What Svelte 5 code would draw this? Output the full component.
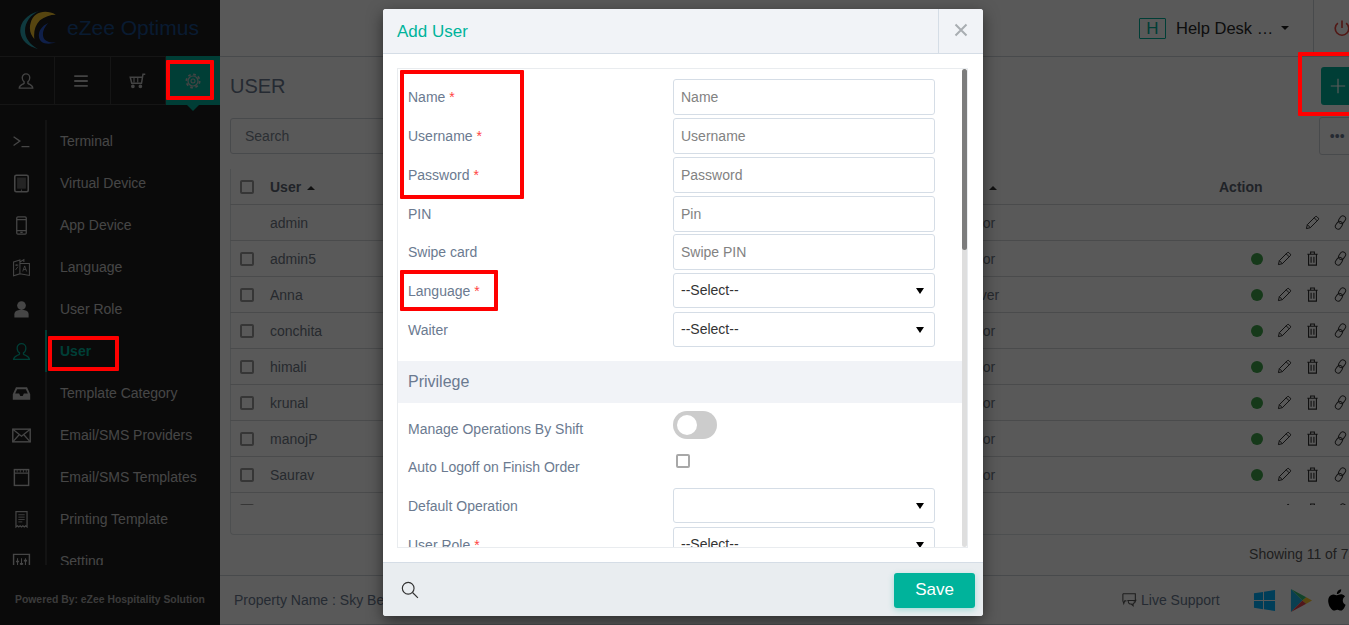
<script>
	const navItems = [
		{ label: 'Terminal', icon: 'terminal' },
		{ label: 'Virtual Device', icon: 'tablet' },
		{ label: 'App Device', icon: 'phone' },
		{ label: 'Language', icon: 'language' },
		{ label: 'User Role', icon: 'role' },
		{ label: 'User', icon: 'user', active: true },
		{ label: 'Template Category', icon: 'inbox' },
		{ label: 'Email/SMS Providers', icon: 'mail' },
		{ label: 'Email/SMS Templates', icon: 'calendar' },
		{ label: 'Printing Template', icon: 'receipt' },
		{ label: 'Setting', icon: 'sliders' }
	];

	const users = [
		{ name: 'admin', role: 'Operator', locked: true },
		{ name: 'admin5', role: 'Operator' },
		{ name: 'Anna', role: 'Co Driver' },
		{ name: 'conchita', role: 'Operator' },
		{ name: 'himali', role: 'Operator' },
		{ name: 'krunal', role: 'Operator' },
		{ name: 'manojP', role: 'Operator' },
		{ name: 'Saurav', role: 'Operator' },
		{ name: 'test', role: 'Operator' }
	];

	const textFields = [
		{ label: 'Name', hint: 'Name', required: true },
		{ label: 'Username', hint: 'Username', required: true },
		{ label: 'Password', hint: 'Password', required: true },
		{ label: 'PIN', hint: 'Pin' },
		{ label: 'Swipe card', hint: 'Swipe PIN' }
	];
</script>

{#snippet navIcon(name)}
	<svg class="nav-icon" viewBox="0 0 24 24" fill="none" stroke="currentColor" stroke-width="1.6">
		{#if name === 'terminal'}
			<path d="M2 6l8 5.5L2 17M12 18.5h10" />
		{:else if name === 'tablet'}
			<rect x="3.5" y="1.5" width="17" height="21" rx="2" stroke-width="2" />
			<rect x="6.5" y="4.5" width="11" height="14" fill="currentColor" stroke="none" opacity="0.45" />
			<circle cx="12" cy="20.5" r="0.8" fill="currentColor" stroke="none" />
		{:else if name === 'phone'}
			<rect x="6" y="1" width="12" height="22" rx="1.5" />
			<path d="M6 4.5h12M6 18.5h12M10.5 20.8h3" />
		{:else if name === 'language'}
			<path d="M2 5l8-2.5V20l-8 2.5zM10 5l5-3v3M10 7h12v15l-12-2" stroke-width="1.3" />
			<path d="M13.5 17l2.500-7 2.500 7M14.500 14.500h3M4 9h4M6 8v2M4.500 15l3-4" stroke-width="1.1" />
		{:else if name === 'role'}
			<circle cx="12" cy="7" r="5.500" fill="currentColor" stroke="none" />
			<path d="M3 22v-4c0-3.500 3-5 6-5.500h6c3 .5 6 2 6 5.500v4z" fill="currentColor" stroke="none" />
		{:else if name === 'user'}
			<path d="M12 2a5.500 5.500 0 0 0-5.500 5.500c0 2.500 1 5 3 6.200v1.500C8 17 2.500 17.500 2 22h20c-.5-4.500-6-5-7.500-6.800v-1.500c2-1.200 3-3.700 3-6.200A5.500 5.500 0 0 0 12 2z" />
		{:else if name === 'inbox'}
			<path d="M5 4h14l4 9v7H1v-7zM6.500 6.500L4 12h5l1.500 3h3L15 12h5l-2.500-5.500z" fill="currentColor" fill-rule="evenodd" stroke="none" />
		{:else if name === 'mail'}
			<rect x="1" y="4" width="22" height="16" stroke-width="1.8" />
			<path d="M1 4l11 9 11-9M1 20l8-9M23 20l-8-9" />
		{:else if name === 'calendar'}
			<rect x="3" y="2" width="18" height="20" stroke-width="1.8" />
			<path d="M3 6.500h18" stroke-width="1.500" />
			<path d="M6.500 2.500v3M10.500 2.500v3M14.500 2.500v3M18 2.500v3" stroke-width="1" />
		{:else if name === 'receipt'}
			<path d="M5 2h14v19.500l-1.750-1.500-1.750 1.500-1.750-1.500-1.750 1.500-1.750-1.500-1.750 1.500L7 20l-2 1.500z" stroke-width="1.500" />
			<path d="M8 6h8M8 9h8M8 12h8M8 15h5" stroke-width="1.100" />
		{:else if name === 'sliders'}
			<path d="M2 22V3h20v19" stroke-width="1.800" />
			<path d="M7 8v12M12 8v12M17 8v12" stroke-width="1.300" />
			<path d="M5 12h4M10 15h4M15 11h4" stroke-width="2.200" />
		{/if}
	</svg>
{/snippet}

<div class="page">
	<aside class="sidebar">
		<div class="logo">
			<svg class="logo-mark" viewBox="0 0 40 44">
				<path d="M20 1C6 5-1 14 0 24c1 9 8 15 19 18C10 37 5 30 5 22 5 13 11 5 20 1z" fill="#2ba6b4" />
				<path d="M38 5C27-1 14 2 11 14c-2 7 0 13 4 17-1-8 1-15 6-20 5-4 11-6 17-6z" fill="#f5c52e" />
				<path d="M30 14c-7 3-11 9-10 15 1 6 7 9 18 6-6 0-11-1-13-5-2-5 0-11 5-16z" fill="#2b5bd0" />
			</svg>
			<span class="logo-text">eZee Optimus</span>
		</div>

		<div class="tabs">
			<div class="tab">
				<svg viewBox="0 0 24 24" fill="none" stroke="currentColor" stroke-width="1.800">
					<path d="M12 2.500a5 5 0 0 0-5 5c0 2.500 1 4.500 2.500 5.700v1.800C8 17 3 17 3 21.500h18c0-4.500-5-4.500-6.500-6.500v-1.800c1.500-1.200 2.500-3.200 2.500-5.700a5 5 0 0 0-5-5z" />
				</svg>
			</div>
			<div class="tab">
				<svg viewBox="0 0 24 24" fill="none" stroke="currentColor" stroke-width="2.600">
					<path d="M3 5.500h18M3 12h18M3 18.500h18" />
				</svg>
			</div>
			<div class="tab">
				<svg viewBox="0 0 24 24" fill="none" stroke="currentColor" stroke-width="2">
					<path d="M23 3h-3l-2 12H5L3 7h16" />
					<path d="M8 8v6M13 8v6" stroke-width="1.500" />
					<circle cx="6.500" cy="19" r="1.500" fill="currentColor" />
					<circle cx="16.500" cy="19" r="1.500" fill="currentColor" />
				</svg>
			</div>
			<div class="tab tab-active">
				<svg viewBox="0 0 24 24" fill="none" stroke="currentColor">
					<circle cx="12" cy="12" r="7.500" stroke-width="1.800" />
					<circle cx="12" cy="12" r="10" stroke-width="2.600" stroke-dasharray="4 3.854" />
					<circle cx="12" cy="12" r="3" stroke-width="1.600" />
				</svg>
			</div>
		</div>

		<nav class="nav">
			{#each navItems as item}
				<div class="nav-item" class:active={item.active}>
					<span class="nav-icon-box">{@render navIcon(item.icon)}</span>
					<span class="nav-label">{item.label}</span>
				</div>
			{/each}
		</nav>

		<div class="powered">Powered By: eZee Hospitality Solution</div>
	</aside>

	<main class="main">
		<header class="topbar">
			<span class="hotel-badge">H</span>
			<span class="hotel-name">Help Desk …</span>
			<span class="caret-down"></span>
			<span class="power">
				<svg viewBox="0 0 24 24" fill="none" stroke="#e8453c" stroke-width="2.200">
					<path d="M12 2v10M6.500 5.500a9 9 0 1 0 11 0" />
				</svg>
			</span>
		</header>

		<section class="content">
			<div class="title-row">
				<h1>USER</h1>
				<button class="add-btn" aria-label="Add">
					<svg viewBox="0 0 20 20" fill="none" stroke="#fff" stroke-width="1.500"><path d="M10 1v18M1 10h18" /></svg>
				</button>
			</div>

			<div class="tools">
				<input class="search" placeholder="Search" />
				<button class="more-btn">•••</button>
			</div>

			<div class="card">
				<div class="table-scroll">
					<div class="row row-head">
						<span class="cell-check"><span class="check"></span></span>
						<span class="cell-name">User <span class="caret-up"></span></span>
						<span class="cell-role">Role <span class="caret-up caret-role"></span></span>
						<span class="cell-action">Action</span>
					</div>
					{#each users as user}
						<div class="row">
							<span class="cell-check">
								{#if !user.locked}<span class="check"></span>{/if}
							</span>
							<span class="cell-name">{user.name}</span>
							<span class="cell-role">{user.role}</span>
							<span class="cell-action icons">
								{#if !user.locked}
									<span class="act"><span class="dot"></span></span>
								{/if}
								<span class="act">
									<svg viewBox="0 0 16 16" fill="none" stroke="#222" stroke-width="1">
										<path d="M1.500 14.500l1-4.200L11 1.800a1.200 1.200 0 0 1 1.700 0l1.500 1.500a1.200 1.200 0 0 1 0 1.700l-8.500 8.500zM2.500 10.300l3.200 3.200M9.800 3l3.200 3.200" />
									</svg>
								</span>
								{#if !user.locked}
									<span class="act">
										<svg viewBox="0 0 16 16" fill="none" stroke="#333" stroke-width="1.200">
											<path d="M2.500 3.500h11M6 3.500V1h4v2.500M3.800 3.500V15h8.400V3.500M6.500 6v6.500M9.500 6v6.500" />
										</svg>
									</span>
								{/if}
								<span class="act">
									<svg viewBox="0 0 16 16" fill="none" stroke="#333" stroke-width="1">
										<rect x="6.700" y="0.600" width="6" height="8.800" rx="3" transform="rotate(35 9.700 5)" />
										<rect x="3.300" y="6.600" width="6" height="8.800" rx="3" transform="rotate(35 6.300 11)" />
									</svg>
								</span>
							</span>
						</div>
					{/each}
				</div>
			</div>

			<div class="showing">Showing 11 of 73</div>
		</section>

		<footer class="page-footer">
			<span class="property">Property Name : Sky Bell Hotel</span>
			<span class="live">
				<svg viewBox="0 0 18 18" fill="none" stroke="#555" stroke-width="1.200">
					<path d="M1 2h14v8h-2M5 10H3l-1 3-1-3V2" />
					<path d="M6 9.500h9.500v-1M7 10c0 2.500 1.500 3.500 3.500 3.500l2 2v-2.500c1.500-.5 2.500-1.500 2.500-3" />
				</svg>
				Live Support
			</span>
			<svg class="store" viewBox="0 0 24 24" fill="#00b2ff">
				<path d="M1 4.500l9.500-1.500v8.500H1zM11.500 2.800L23 1v10.500H11.500zM1 12.500h9.500V21L1 19.500zM11.500 12.500H23V23l-11.500-1.800z" />
			</svg>
			<svg class="store" viewBox="0 0 24 24">
				<path d="M1 0l12 12L1 24z" fill="#1fb5e8" />
				<path d="M1 0l16 8.500L13 12z" fill="#36c47a" />
				<path d="M1 24l16-8.500L13 12z" fill="#e8434a" />
				<path d="M17 8.500l6 3.500-6 3.500-4-3.500z" fill="#ffc928" />
			</svg>
			<svg class="store apple" viewBox="0 0 24 24" fill="#000">
				<path d="M17.050 12.040c-.03-2.600 2.120-3.850 2.220-3.910-1.210-1.770-3.090-2.010-3.760-2.040-1.600-.16-3.120.94-3.930.94-.81 0-2.060-.92-3.390-.89-1.740.03-3.350 1.010-4.250 2.570-1.810 3.140-.46 7.800 1.300 10.350.86 1.250 1.890 2.650 3.240 2.600 1.300-.05 1.790-.84 3.360-.84 1.570 0 2.010.84 3.390.81 1.400-.02 2.280-1.270 3.140-2.530.99-1.450 1.400-2.850 1.420-2.920-.03-.01-2.720-1.040-2.740-4.140zM14.470 4.400c.72-.87 1.200-2.080 1.070-3.280-1.030.04-2.290.69-3.030 1.550-.66.77-1.240 2-1.090 3.180 1.150.09 2.330-.58 3.050-1.450z" />
			</svg>
		</footer>
	</main>

	<div class="backdrop">
		<div class="modal">
			<div class="modal-head">
				<h2>Add User</h2>
				<button class="close" aria-label="Close">
					<svg viewBox="0 0 14 14" fill="none" stroke="#a9adb2" stroke-width="2"><path d="M1.500 1.500l11 11M12.500 1.500l-11 11" /></svg>
				</button>
			</div>

			<div class="modal-body">
				<div class="form-box">
					<div class="form-scroll">
						{#each textFields as field}
							<div class="field">
								<span class="label">{field.label}{#if field.required}<i>*</i>{/if}</span>
								<input class="control" placeholder={field.hint} />
							</div>
						{/each}
						<div class="field field-select">
							<span class="label">Language<i>*</i></span>
							<div class="select"><span>--Select--</span></div>
						</div>
						<div class="field field-select">
							<span class="label">Waiter</span>
							<div class="select"><span>--Select--</span></div>
						</div>

						<div class="section-title">Privilege</div>

						<div class="option">
							<span class="label">Manage Operations By Shift</span>
							<span class="toggle"><span class="knob"></span></span>
						</div>
						<div class="option">
							<span class="label">Auto Logoff on Finish Order</span>
							<span class="box"></span>
						</div>
						<div class="field field-select field-default">
							<span class="label">Default Operation</span>
							<div class="select"></div>
						</div>
						<div class="field field-select">
							<span class="label">User Role<i>*</i></span>
							<div class="select"><span>--Select--</span></div>
						</div>
					</div>
					<div class="scrollbar"><div class="thumb"></div></div>
				</div>
			</div>

			<div class="modal-foot">
				<svg viewBox="0 0 20 20" fill="none" stroke="#333" stroke-width="1.300">
					<circle cx="8" cy="8" r="6.500" />
					<path d="M12.800 12.800l6 6" />
				</svg>
				<button class="save">Save</button>
			</div>
		</div>
	</div>

	<!-- red guide boxes drawn on the screenshot -->
	<div class="mark mark-gear"></div>
	<div class="mark mark-user"></div>
	<div class="mark mark-plus"></div>
	<div class="mark mark-names"></div>
	<div class="mark mark-language"></div>
</div>

<style>
	:global(body) {
		margin: 0;
		overflow: hidden;
		font-family: 'Liberation Sans', Arial, sans-serif;
	}

	.page {
		position: relative;
		display: flex;
		width: 1349px;
		height: 625px;
		overflow: hidden;
		background: #fff;
		font-size: 14px;
	}

	/* sidebar */
	.sidebar {
		flex: 0 0 220px;
		display: flex;
		flex-direction: column;
		background: #1d1d1d;
		color: #c8c8c8;
	}

	.logo {
		display: flex;
		align-items: center;
		height: 56px;
		padding-left: 20px;
		box-sizing: border-box;
	}

	.logo-mark {
		width: 38px;
		height: 41px;
		margin-top: 4px;
	}

	.logo-text {
		margin-left: 9px;
		font-size: 21px;
		color: #1c4e8e;
	}

	.tabs {
		display: flex;
		height: 49px;
		border-top: 1px solid #3c3c3c;
		border-bottom: 1px solid #3c3c3c;
		box-sizing: border-box;
	}

	.tab {
		flex: 1;
		display: flex;
		align-items: center;
		justify-content: center;
		border-right: 1px solid #3c3c3c;
		color: #c0c0c0;
	}

	.tab svg {
		width: 18px;
		height: 18px;
	}

	.tab:nth-child(-n+3) svg {
		margin-right: 2px;
	}

	.tab-active {
		position: relative;
		background: #00b39b;
		border-right: 0;
		margin: -1px 0;
	}

	.tab-active svg {
		width: 16px;
		height: 16px;
		color: #c0c0c0;
		margin-right: 0;
	}

	.tab-active::after {
		content: '';
		position: absolute;
		left: 21px;
		top: 100%;
		border: 6px solid transparent;
		border-top-color: #00b39b;
		border-bottom: 0;
	}

	.nav {
		height: 445px;
		margin-top: 15px;
		overflow: hidden;
	}

	.nav-item {
		display: flex;
		align-items: stretch;
		height: 42px;
	}

	.nav-icon-box {
		flex: 0 0 45px;
		display: flex;
		align-items: center;
		padding-right: 3px;
		justify-content: center;
		box-sizing: border-box;
	}

	.nav-icon {
		width: 19px;
		height: 19px;
	}

	.nav-label {
		flex: 1;
		display: flex;
		align-items: center;
		padding-left: 13px;
		border-left: 2px solid #383838;
	}

	.nav-item.active {
		color: #00b39b;
	}

	.nav-item.active .nav-label {
		border-left-color: #00b39b;
		font-weight: 700;
	}

	.powered {
		margin-top: auto;
		height: 50px;
		line-height: 50px;
		padding-left: 15px;
		font-size: 10.400px;
		font-weight: 700;
		color: #a8a8a8;
	}

	/* main */
	.main {
		flex: 0 0 1150px;
		display: flex;
		flex-direction: column;
		height: 625px;
		color: #6b7a90;
	}

	.topbar {
		display: flex;
		align-items: center;
		flex: 0 0 57px;
		box-sizing: border-box;
		border-bottom: 1px solid #cfd4d9;
		padding-left: 919px;
	}

	.hotel-badge {
		flex: none;
		width: 27px;
		height: 21px;
		box-sizing: border-box;
		border: 1px solid #00b39b;
		border-radius: 1px;
		color: #00b39b;
		font-size: 17px;
		line-height: 19px;
		text-align: center;
	}

	.hotel-name {
		flex: none;
		margin-left: 10px;
		font-size: 16.500px;
		color: #2a2a2a;
		white-space: nowrap;
	}

	.caret-down {
		flex: none;
		margin-left: 8px;
		border: 4px solid transparent;
		border-top-color: #222;
		border-bottom: 0;
	}

	.power {
		display: flex;
		align-items: center;
		justify-content: center;
		flex: 0 0 57px;
		height: 100%;
		margin-left: 24px;
		border-left: 1px solid #cfd4d9;
		box-sizing: border-box;
	}

	.power svg {
		width: 18px;
		height: 18px;
	}

	.content {
		flex: 1;
		display: flex;
		flex-direction: column;
		padding: 0 11px 0 10px;
	}

	.title-row {
		display: flex;
		align-items: center;
		justify-content: space-between;
		height: 38px;
		margin-top: 10px;
	}

	h1 {
		margin: 0;
		font-size: 20px;
		font-weight: 400;
	}

	.add-btn {
		width: 38px;
		height: 38px;
		padding: 0 5px 0 0;
		display: flex;
		align-items: center;
		justify-content: center;
		background: #00b39b;
		border: 0;
		border-radius: 3px;
	}

	.add-btn svg {
		width: 16px;
		height: 16px;
	}

	.tools {
		display: flex;
		justify-content: space-between;
		align-items: center;
		height: 38px;
		margin-top: 12px;
	}

	.search {
		width: 420px;
		height: 36px;
		box-sizing: border-box;
		padding: 0 14px;
		border: 1px solid #cfd4d9;
		border-radius: 3px;
		font: 14px 'Liberation Sans', Arial, sans-serif;
	}

	.search::placeholder {
		color: #7d8793;
	}

	.more-btn {
		width: 40px;
		height: 38px;
		padding: 0 4px 0 0;
		background: #fff;
		border: 1px solid #cfd4d9;
		border-radius: 3px;
		color: #6b7a90;
		font-size: 14px;
		font-family: inherit;
	}

	.card {
		height: 366px;
		margin-top: 14px;
		box-sizing: border-box;
		border: 1px solid #dde1e5;
		border-top: 0;
		border-right: 0;
		border-radius: 0 0 0 4px;
	}

	.table-scroll {
		height: 336px;
		overflow: hidden;
		margin-left: -1px;
	}

	.row {
		display: flex;
		align-items: center;
		height: 36px;
		box-sizing: border-box;
		border-bottom: 1px solid #d5d8db;
		color: #6f7885;
	}

	.row-head {
		height: 36px;
		font-weight: 700;
		color: #5d6673;
	}

	.cell-check {
		flex: 0 0 40px;
		display: flex;
		padding-left: 10px;
		box-sizing: border-box;
	}

	.cell-name {
		flex: 0 0 670px;
	}

	.cell-role {
		flex: 0 0 279px;
		white-space: nowrap;
	}

	.cell-action {
		flex: 1;
	}

	.icons {
		display: flex;
		justify-content: flex-end;
		padding-right: 5px;
	}

	.act {
		display: flex;
		align-items: center;
		justify-content: center;
		width: 28px;
		height: 16px;
	}

	.act svg {
		width: 15px;
		height: 15px;
	}

	.dot {
		width: 12px;
		height: 12px;
		margin-left: 2px;
		border-radius: 50%;
		background: #3fa34a;
	}

	.check {
		width: 14px;
		height: 14px;
		box-sizing: border-box;
		border: 2px solid #9a9a9a;
		border-radius: 2px;
	}

	.caret-up {
		display: inline-block;
		vertical-align: 2px;
		margin-left: 2px;
		border: 4px solid transparent;
		border-bottom-color: #333;
		border-top: 0;
	}

	.caret-role {
		margin-left: 15px;
	}

	.showing {
		margin-top: 11px;
		text-align: right;
		padding-right: 3px;
		color: #5a5a5a;
	}

	.page-footer {
		flex: 0 0 50px;
		box-sizing: border-box;
		display: flex;
		align-items: center;
		border-top: 1px solid #cfd4d9;
		border-bottom: 1px solid #cfd4d9;
		padding: 0 0 0 14px;
		color: #6b7a90;
	}

	.property {
		flex: 0 0 888px;
		white-space: nowrap;
	}

	.live {
		flex: 0 0 131px;
		display: flex;
		align-items: center;
		gap: 3px;
	}

	.live svg {
		width: 16px;
		height: 16px;
	}

	.store {
		width: 23px;
		height: 25px;
		margin-right: 14px;
	}

	.apple {
		width: 25px;
		margin-left: -2px;
	}

	/* modal */
	.backdrop {
		position: absolute;
		inset: 0;
		display: flex;
		justify-content: center;
		align-items: flex-start;
		padding: 9px 0 0 17px;
		box-sizing: border-box;
		background: rgba(0, 0, 0, 0.65);
	}

	.modal {
		display: flex;
		flex-direction: column;
		width: 600px;
		height: 607px;
		border-radius: 3px;
		background: #fff;
		box-shadow: 0 5px 15px rgba(0, 0, 0, 0.5);
		overflow: hidden;
	}

	.modal-head {
		display: flex;
		align-items: center;
		flex: 0 0 45px;
		box-sizing: border-box;
		background: #f1f3f7;
		border-bottom: 1px solid #d5dde6;
	}

	h2 {
		flex: 1;
		margin: 2px 0 0;
		padding-left: 14px;
		font-size: 17px;
		font-weight: 400;
		color: #00b39b;
	}

	.close {
		width: 45px;
		height: 44px;
		display: flex;
		align-items: center;
		justify-content: center;
		padding: 0 0 3px;
		background: none;
		border: 0;
		border-left: 1px solid #d5dde6;
	}

	.close svg {
		width: 14px;
		height: 14px;
	}

	.modal-body {
		flex: 1;
		min-height: 0;
		padding: 14px 15px 14px 14px;
	}

	.form-box {
		display: flex;
		height: 480px;
		box-sizing: border-box;
		border: 1px solid #e9ecef;
	}

	.form-scroll {
		flex: 1;
		overflow: hidden;
		padding-top: 10px;
	}

	.scrollbar {
		flex: 0 0 5px;
		background: #dedede;
		border-radius: 3px;
	}

	.thumb {
		height: 181px;
		background: #7c7c7c;
		border-radius: 3px;
	}

	.field {
		display: flex;
		align-items: center;
		height: 36px;
		margin-bottom: 3px;
	}

	.field:nth-child(4) {
		margin-bottom: 2px;
	}

	.field-select {
		height: 35px;
		margin-bottom: 4px;
	}

	.field-default {
		margin-top: 2px;
	}

	.label {
		flex: 0 0 275px;
		padding-left: 10px;
		box-sizing: border-box;
		color: #6b7a90;
		white-space: nowrap;
	}

	.label i {
		margin-left: 4px;
		font-style: normal;
		color: #f44;
	}

	.control,
	.select {
		width: 262px;
		height: 100%;
		box-sizing: border-box;
		border: 1px solid #d5dde6;
		border-radius: 3px;
		padding: 0 7px;
		background: #fff;
		font: 14px 'Liberation Sans', Arial, sans-serif;
	}

	.control::placeholder {
		color: #828282;
	}

	.select {
		position: relative;
		display: flex;
		align-items: center;
		padding-bottom: 1px;
		color: #333;
	}

	.select::after {
		content: '';
		position: absolute;
		right: 10px;
		top: 14px;
		border: 4px solid transparent;
		border-top: 6px solid #000;
		border-bottom: 0;
	}

	.section-title {
		display: flex;
		align-items: center;
		height: 42px;
		margin-top: 14px;
		padding-left: 10px;
		background: #f1f3f7;
		color: #6b7a90;
		font-size: 16px;
	}

	.option {
		display: flex;
		height: 38px;
		align-items: center;
		position: relative;
	}

	.section-title + .option {
		margin-top: 7px;
	}

	.toggle {
		align-self: flex-start;
		margin: 1px 0 0 0;
		width: 44px;
		height: 28px;
		border-radius: 14px;
		background: #ccc;
		position: relative;
	}

	.knob {
		position: absolute;
		left: 4px;
		top: 4px;
		width: 20px;
		height: 20px;
		border-radius: 50%;
		background: #fff;
	}

	.box {
		align-self: flex-start;
		margin: 6px 0 0 3px;
		width: 14px;
		height: 14px;
		box-sizing: border-box;
		border: 2px solid #a8a8a8;
		border-radius: 2px;
	}

	.modal-foot {
		display: flex;
		align-items: center;
		justify-content: space-between;
		flex: 0 0 54px;
		box-sizing: border-box;
		padding: 0 8px 0 18px;
		background: #e9edf0;
		border-top: 1px solid #d5dde6;
	}

	.modal-foot svg {
		width: 18px;
		height: 18px;
	}

	.save {
		width: 81px;
		height: 35px;
		padding: 0;
		margin-top: 1px;
		border: 0;
		border-radius: 3px;
		background: #00b39b;
		box-shadow: 0 2px 6px rgba(0, 179, 155, 0.3);
		color: #fff;
		font: 17px 'Liberation Sans', Arial, sans-serif;
	}

	/* guide boxes */
	.mark {
		position: absolute;
		box-sizing: border-box;
		border: 4px solid #f00;
		border-radius: 1px;
	}

	.mark-gear {
		left: 166px;
		top: 60px;
		width: 48px;
		height: 40px;
	}

	.mark-user {
		left: 48px;
		top: 336px;
		width: 71px;
		height: 35px;
	}

	.mark-plus {
		left: 1298px;
		top: 52px;
		width: 70px;
		height: 64px;
	}

	.mark-names {
		left: 400px;
		top: 70px;
		width: 124px;
		height: 129px;
	}

	.mark-language {
		left: 400px;
		top: 270px;
		width: 98px;
		height: 41px;
	}
</style>
